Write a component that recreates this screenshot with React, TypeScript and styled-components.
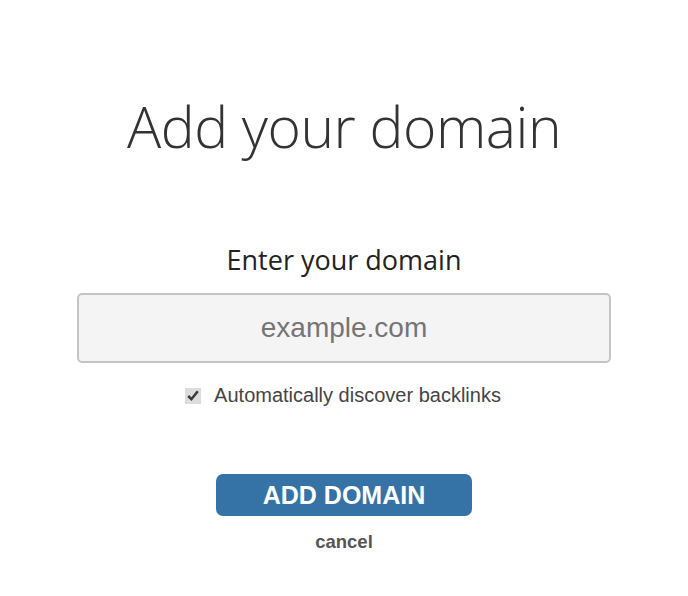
import React, { useState } from 'react'
import styled, { createGlobalStyle } from 'styled-components'

const GlobalStyle = createGlobalStyle`
    body {
        margin: 0;
        background: #ffffff;
        font-family: 'Liberation Sans', Arial, sans-serif;
    }
`

const Page = styled.main`
    display: flex;
    flex-direction: column;
    align-items: center;
    padding-top: 88px;
`

const Title = styled.h1`
    margin: 0;
    font-family: 'Open Sans', sans-serif;
    font-weight: 300;
    font-size: 57px;
    line-height: 76px;
    color: #333333;
    letter-spacing: -0.5px;
`

const Form = styled.form`
    display: flex;
    flex-direction: column;
    align-items: center;
    margin-top: 78px;
    width: 534px;
`

const Label = styled.label`
    font-family: 'Open Sans', sans-serif;
    font-size: 27px;
    line-height: 36px;
    color: #222222;
    margin-bottom: 15px;
`

const DomainInput = styled.input`
    box-sizing: border-box;
    width: 100%;
    height: 70px;
    border: 2px solid #c4c4c4;
    border-radius: 5px;
    background: #f4f4f4;
    text-align: center;
    font-family: 'Liberation Sans', Arial, sans-serif;
    font-size: 28px;
    color: #333333;
    outline: none;

    ::placeholder {
        color: #777777;
    }
`

const CheckRow = styled.label`
    display: flex;
    align-items: center;
    gap: 13px;
    margin-top: 21px;
    font-size: 20px;
    color: #444444;
    cursor: pointer;
`

const Check = styled.input`
    width: 16px;
    height: 16px;
    margin: 0 0 0 -2px;
    accent-color: #dddddd;
`

const Actions = styled.div`
    display: flex;
    flex-direction: column;
    align-items: center;
    margin-top: 67px;
    gap: 15px;
`

const PrimaryButton = styled.button`
    width: 256px;
    height: 42px;
    border: none;
    border-radius: 7px;
    background: #3572a5;
    color: #ffffff;
    font-family: 'Liberation Sans', Arial, sans-serif;
    font-weight: bold;
    font-size: 25px;
    cursor: pointer;
`

const CancelLink = styled.a`
    font-weight: bold;
    font-size: 18.5px;
    color: #555555;
    text-decoration: none;
    cursor: pointer;
`

const App = (): JSX.Element => {
    const [discover, setDiscover] = useState(true)

    return (
        <>
            <GlobalStyle />
            <Page>
                <Title>Add your domain</Title>
                <Form onSubmit={(e) => e.preventDefault()}>
                    <Label htmlFor="domain">Enter your domain</Label>
                    <DomainInput id="domain" placeholder="example.com" />
                    <CheckRow>
                        <Check
                            type="checkbox"
                            checked={discover}
                            onChange={() => setDiscover(!discover)}
                        />
                        Automatically discover backlinks
                    </CheckRow>
                    <Actions>
                        <PrimaryButton type="submit">ADD DOMAIN</PrimaryButton>
                        <CancelLink>cancel</CancelLink>
                    </Actions>
                </Form>
            </Page>
        </>
    )
}

export default App
